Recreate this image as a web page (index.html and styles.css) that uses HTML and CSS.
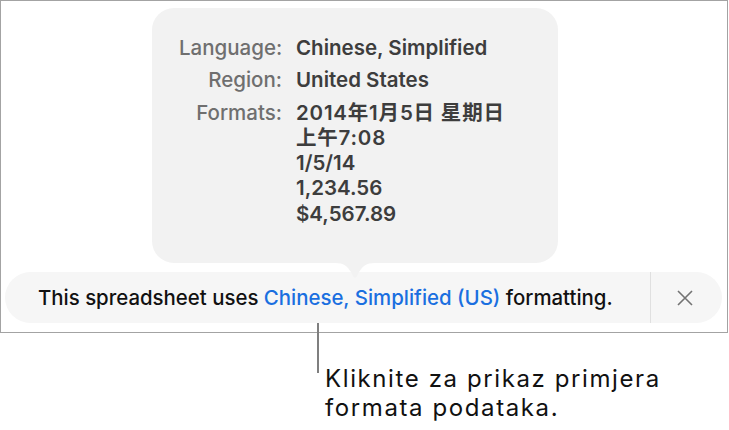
FILE: index.html
```html
<!DOCTYPE html>
<html lang="hr">
<head>
  <meta charset="UTF-8">
  <meta name="viewport" content="width=device-width, initial-scale=1.0">
  <title>Format podataka</title>
  <link rel="stylesheet" href="styles.css">
</head>
<body>
<div class="frame">
  <div class="popover">
    <dl class="info">
      <dt>Language:</dt>
      <dd>Chinese, Simplified</dd>
      <dt>Region:</dt>
      <dd>United States</dd>
      <dt>Formats:</dt>
      <dd>
        <span class="cjk">2014年1月5日 星期日</span>
        <span class="cjk">上午7:08</span>
        <span>1/5/14</span>
        <span>1,234.56</span>
        <span>$4,567.89</span>
      </dd>
    </dl>
    <svg class="tail" width="40" height="18" viewBox="0 0 40 18">
      <path d="M0 0 C9 0 12 3 16 9 L18 13 Q20 16 22 13 L24 9 C28 3 31 0 40 0 Z" fill="#f2f2f2"/>
    </svg>
  </div>
  <div class="bar">
    <p class="bar-text">This spreadsheet uses <a href="#">Chinese, Simplified (US)</a> formatting.</p>
    <button class="close" aria-label="Close">
      <svg width="16" height="16" viewBox="0 0 16 16">
        <path d="M1 1 L15 15 M15 1 L1 15" stroke="#737373" stroke-width="1.6" fill="none"/>
      </svg>
    </button>
  </div>
</div>
<div class="callout">
  <div class="callout-line"></div>
  <p class="callout-text">
    <span class="callout-row">Kliknite za prikaz primjera</span>
    <span class="callout-row">formata podataka.</span>
  </p>
</div>
</body>
</html>
```

FILE: styles.css
```css
* {
  margin: 0;
  padding: 0;
  box-sizing: border-box;
}
body {
  font-family: Inter, 'Noto Sans', 'Noto Sans CJK SC', sans-serif;
  background: #ffffff;
  color: #111111;
}
.frame {
  width: 728px;
  height: 333px;
  border: 1px solid #a3a3a3;
  display: flex;
  flex-direction: column;
}
/* 弹出框 */
.popover {
  position: relative;
  z-index: 1;
  width: 406px;
  height: 255px;
  margin: 7px 0 0 151px;
  padding: 27px 0 0 27px;
  background: #f2f2f2;
  border-radius: 22px;
}
.info {
  display: grid;
  grid-template-columns: 103px auto;
  column-gap: 14px;
  row-gap: 7px;
  font-size: 20.5px;
  line-height: 25.3px;
}
.info dt {
  text-align: right;
  color: #6f6f6f;
  font-weight: 500;
  white-space: nowrap;
}
.info dd {
  display: flex;
  flex-direction: column;
  color: #3d3d3d;
  font-weight: 600;
  white-space: nowrap;
}
.info .cjk {
  letter-spacing: 0.8px;
}
.tail {
  position: absolute;
  left: 183px;
  top: 255px;
}
/* 提示条 */
.bar {
  display: flex;
  align-items: stretch;
  height: 51px;
  width: 717px;
  margin: 9px 0 0 4px;
  background: #f6f6f6;
  border-radius: 26px;
}
.bar-text {
  flex: 1;
  display: flex;
  align-items: center;
  padding-left: 33px;
  font-size: 20.4px;
  font-weight: 500;
  color: #111111;
  white-space: pre;
}
.bar-text a {
  color: #1a6fe0;
  text-decoration: none;
}
.close {
  width: 72px;
  border: none;
  border-left: 1px solid #e0e0e0;
  background: transparent;
  display: flex;
  align-items: center;
  justify-content: center;
  padding-right: 4px;
}
/* 标注 */
.callout {
  display: flex;
  align-items: flex-start;
  margin: -10px 0 0 317px;
}
.callout-line {
  width: 2px;
  height: 50px;
  background: #7f7f7f;
}
.callout-text {
  display: flex;
  flex-direction: column;
  margin: 41px 0 0 6px;
  font-size: 24px;
  letter-spacing: 1.6px;
  line-height: 29px;
  color: #111111;
}
.callout-row {
  white-space: nowrap;
}
```
